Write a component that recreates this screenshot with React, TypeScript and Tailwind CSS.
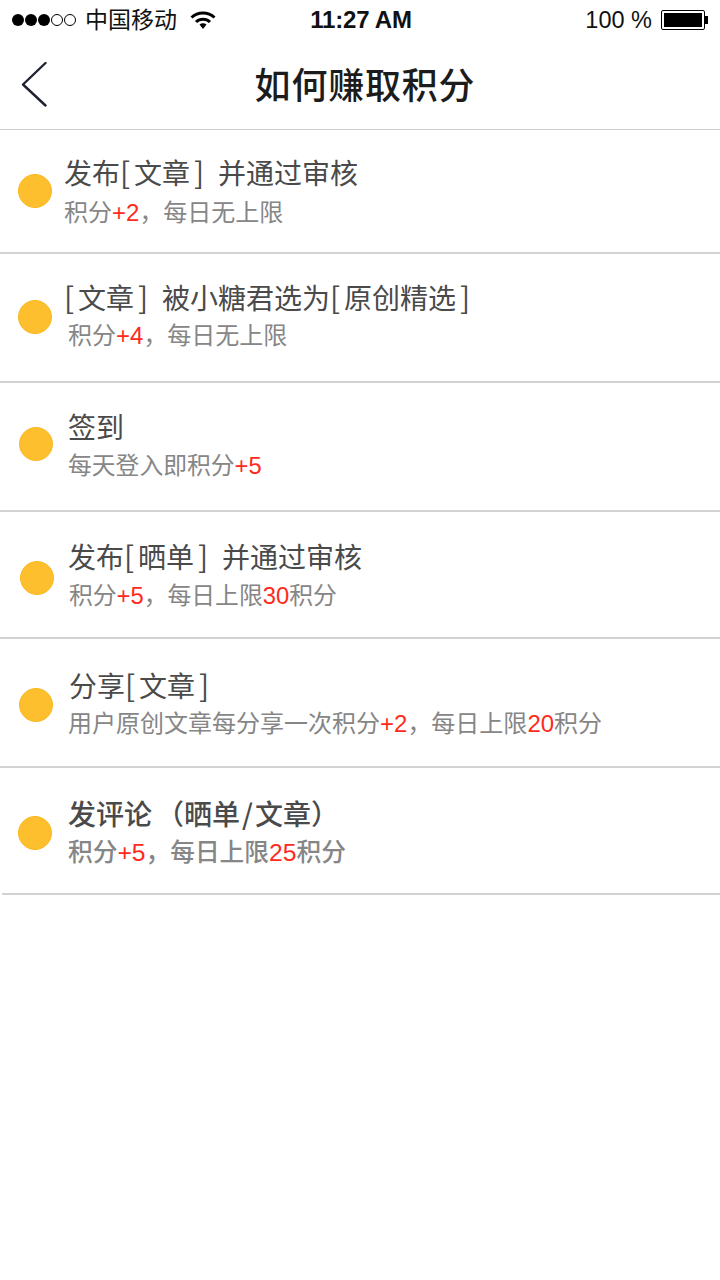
import React from 'react'

const cjk = "font-['Noto_Sans_CJK_SC','Noto_Sans_CJK_JP',sans-serif]"

const Red: React.FC<{ children: React.ReactNode }> = ({ children }) => (
  <span className="text-[#ff2a1c] font-['Liberation_Sans',sans-serif]">{children}</span>
)

// brackets and spaces in the titles are set in half-em cells
const Open = () => <span className="inline-block w-[14px] text-left text-[30px] leading-none">[</span>
const Close = () => <span className="inline-block w-[14px] text-right text-[30px] leading-none">]</span>
const Gap = () => <span className="inline-block w-[14px]"></span>

type RowProps = {
  rowClass: string
  dotClass: string
  titleClass: string
  subClass: string
  title: React.ReactNode
  children: React.ReactNode
}

const Row: React.FC<RowProps> = ({ rowClass, dotClass, titleClass, subClass, title, children }) => (
  <div className={`flex items-start border-b-2 border-[#d2d2d2] ${rowClass}`}>
    <div className={`w-[34px] h-[34px] shrink-0 rounded-full bg-[#fdbf2d] border border-[#fbb91f] ${dotClass}`}></div>
    <div className="flex flex-col whitespace-nowrap">
      <p className={`text-[28px] leading-[38px] text-[#4a4a4a] ${titleClass}`}>{title}</p>
      <p className={`leading-[38px] text-[#868686] ${subClass}`}>{children}</p>
    </div>
  </div>
)

export default function App() {
  return (
    <div className={`w-[720px] h-[1280px] bg-white overflow-hidden ${cjk}`}>
      {/* status bar */}
      <div className="h-[40px] grid grid-cols-3 items-center px-3 text-[#111] font-['Liberation_Sans','Noto_Sans_CJK_SC',sans-serif]">
        <div className="flex items-center">
          <div className="flex gap-[1px]">
            <span className="w-[12px] h-[12px] rounded-full bg-black"></span>
            <span className="w-[12px] h-[12px] rounded-full bg-black"></span>
            <span className="w-[12px] h-[12px] rounded-full bg-black"></span>
            <span className="w-[12px] h-[12px] rounded-full border border-black"></span>
            <span className="w-[12px] h-[12px] rounded-full border border-black"></span>
          </div>
          <span className={`ml-[9px] text-[23px] whitespace-nowrap pb-[3px] ${cjk}`}>中国移动</span>
          <svg className="ml-[13px]" width="26" height="20" viewBox="0 0 26 20">
            <path d="M1.5 7.5C8 1.5 18 1.5 24.5 7.5" fill="none" stroke="#000" strokeWidth="3" />
            <path d="M6 12C10 8.3 16 8.3 20 12" fill="none" stroke="#000" strokeWidth="3" />
            <path d="M9.5 14.5C11.5 12.8 14.5 12.8 16.5 14.5L13 19Z" fill="#000" />
          </svg>
        </div>
        <div className="text-center text-[24px] font-bold whitespace-nowrap tracking-[-0.2px] pl-[2px]">11:27 AM</div>
        <div className="flex items-center justify-end">
          <span className="text-[23.5px] whitespace-nowrap pt-[2px]">100 %</span>
          <div className="ml-[9px] w-[44px] h-[20px] rounded-[2px] border border-black p-[2px]">
            <div className="w-full h-full bg-black"></div>
          </div>
          <div className="w-[3px] h-[8px] bg-black"></div>
        </div>
      </div>

      {/* nav */}
      <div className="relative h-[90px] border-b border-[#cfcfcf] flex items-center justify-center">
        <svg className="absolute left-[20px] top-[21px]" width="28" height="46" viewBox="0 0 28 46">
          <path d="M25.5 2L3 23.5L25.5 44.5" fill="none" stroke="#1f2230" strokeWidth="2.4" strokeLinecap="round" strokeLinejoin="round" />
        </svg>
        <h1 className="text-[36px] leading-none font-medium tracking-[0.8px] text-[#1c1c1c] pb-[3px] pl-[10px]">如何赚取积分</h1>
      </div>

      <Row
        rowClass="h-[124px] pl-[18px] pt-[23px]"
        dotClass="mt-[21px]"
        titleClass="ml-[12px]"
        subClass="text-[24px] ml-[12px] mt-[1px]"
        title={<>发布<Open />文章<Close /><Gap />并通过审核</>}
      >
        积分<Red>+2</Red>，每日无上限
      </Row>
      <Row
        rowClass="h-[129px] pl-[18px] pt-[24px]"
        dotClass="mt-[22px]"
        titleClass="ml-[12px]"
        subClass="text-[24px] ml-[16px] -mt-[1px]"
        title={<><Open />文章<Close /><Gap />被小糖君选为<Open />原创精选<Close /></>}
      >
        积分<Red>+4</Red>，每日无上限
      </Row>
      <Row
        rowClass="h-[129px] pl-[19px] pt-[24px]"
        dotClass="mt-[20px]"
        titleClass="ml-[15px]"
        subClass="text-[23.8px] ml-[15px]"
        title="签到"
      >
        每天登入即积分<Red>+5</Red>
      </Row>
      <Row
        rowClass="h-[127px] pl-[20px] pt-[25px]"
        dotClass="mt-[24px]"
        titleClass="ml-[14px]"
        subClass="text-[23.8px] ml-[15px]"
        title={<>发布<Open />晒单<Close /><Gap />并通过审核</>}
      >
        积分<Red>+5</Red>，每日上限<Red>30</Red>积分
      </Row>
      <Row
        rowClass="h-[129px] pl-[19px] pt-[27px]"
        dotClass="mt-[22px]"
        titleClass="ml-[16px]"
        subClass="text-[24px] ml-[15px] -mt-[1px]"
        title={<>分享<Open />文章<Close /></>}
      >
        用户原创文章每分享一次积分<Red>+2</Red>，每日上限<Red>20</Red>积分
      </Row>
      <Row
        rowClass="h-[127px] pl-[18px] ml-[2px] pt-[26px]"
        dotClass="-ml-[2px] mt-[22px]"
        titleClass="ml-[16px] font-medium"
        subClass="text-[24.7px] ml-[16px] -mt-[1px] font-medium"
        title={<>发评论<span className="ml-[4px]">（</span>晒单<span className="mx-[2px]">/</span>文章）</>}
      >
        积分<Red>+5</Red>，每日上限<Red>25</Red>积分
      </Row>
    </div>
  )
}
